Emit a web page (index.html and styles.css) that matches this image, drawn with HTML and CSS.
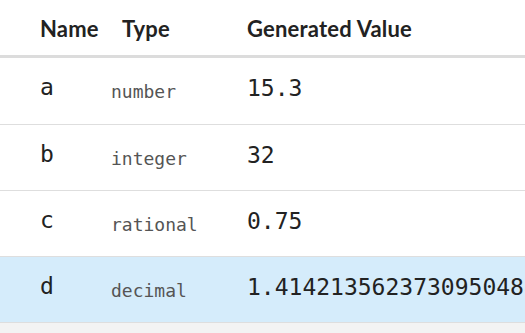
FILE: index.html
```html
<!DOCTYPE html>
<html>
<head>
<meta charset="utf-8">
<link rel="stylesheet" href="styles.css">
</head>
<body>
<div class="table">
  <div class="row head">
    <div class="h-name">Name</div>
    <div class="h-type">Type</div>
    <div class="h-value">Generated Value</div>
  </div>
  <div class="row first">
    <div class="c-name">a</div>
    <div class="c-type">number</div>
    <div class="c-value">15.3</div>
  </div>
  <div class="row">
    <div class="c-name">b</div>
    <div class="c-type">integer</div>
    <div class="c-value">32</div>
  </div>
  <div class="row">
    <div class="c-name">c</div>
    <div class="c-type">rational</div>
    <div class="c-value">0.75</div>
  </div>
  <div class="row selected">
    <div class="c-name">d</div>
    <div class="c-type">decimal</div>
    <div class="c-value">1.4142135623730950488</div>
  </div>
</div>
</body>
</html>
```
FILE: styles.css
```css
html, body {
  margin: 0;
  padding: 0;
  overflow: hidden;
  background: #f3f3f3;
  width: 525px;
  height: 333px;
}
.table {
  background: #fff;
  width: 700px;
}
.row {
  display: grid;
  grid-template-columns: 71px 136px 1fr;
  padding-left: 40px;
  height: 65px;
  border-bottom: 1px solid #dedede;
  align-items: center;
  white-space: nowrap;
  color: #222;
}
.row.first {
  height: 66px;
}
.row.head {
  height: 55px;
  border-bottom: 3px solid #dcdcdc;
  font-family: "Lato", sans-serif;
  font-weight: 700;
  font-size: 22px;
  letter-spacing: 0.2px;
  color: #222;
}
.h-name, .h-type, .h-value {
  padding-top: 1px;
}
.h-type {
  padding-left: 11px;
}
.c-name, .c-value, .c-type {
  font-family: "DejaVu Sans Mono", monospace;
}
.c-name {
  font-size: 23px;
  padding-bottom: 8px;
}
.c-type {
  font-size: 18px;
  color: #555;
  padding-top: 1px;
}
.c-value {
  font-size: 23px;
  padding-bottom: 6px;
}
.row.selected {
  background: #d5ecfb;
}
```
